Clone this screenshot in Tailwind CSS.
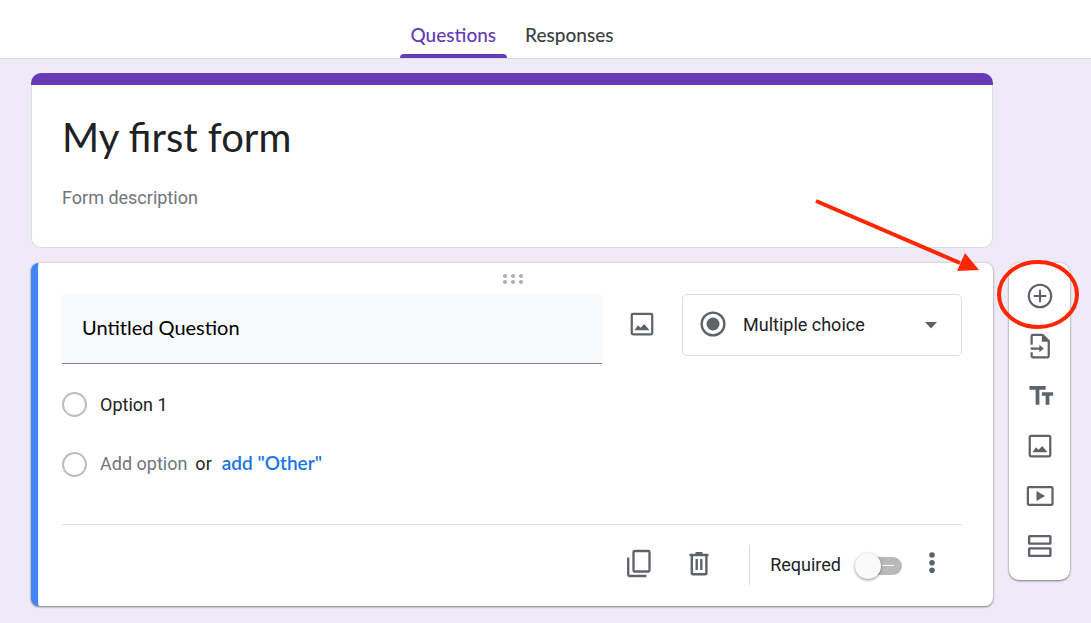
<!DOCTYPE html>
<html lang="en">
<head>
<meta charset="utf-8">
<meta name="viewport" content="width=device-width, initial-scale=1">
<title>My first form</title>
<script src="https://cdn.jsdelivr.net/npm/@tailwindcss/browser@4"></script>
</head>
<body class="min-h-screen bg-[#eeeaf7] font-[Roboto,sans-serif] text-lg text-[#202124]">
<header class="border-b border-[#dadce0] bg-white pt-3">
  <nav class="mr-[67px] flex justify-center gap-[7px] font-[Lato,sans-serif] text-[19px] font-medium">
    <a href="#questions" aria-current="page" class="relative flex h-[46px] items-center px-[11px] text-[#673ab7]">Questions<span class="absolute inset-x-0 bottom-0 h-1 rounded-t bg-[#673ab7]"></span></a>
    <a href="#responses" class="flex h-[46px] items-center px-[11px] text-[#3c4043]">Responses</a>
  </nav>
</header>

<div class="flex items-end gap-4 pt-[14px] pr-[21px] pb-[17px] pl-[31px]">
  <main class="min-w-0 flex-1">
    <section>
      <div class="h-3 rounded-t-[10px] bg-[#673ab7]"></div>
      <div class="flex flex-col rounded-b-[10px] border border-t-0 border-[#dadce0] bg-white px-[30px] pt-[22px] pb-[35px]">
        <input aria-label="Form title" value="My first form" class="h-[60px] w-full font-[Lato,sans-serif] text-[40px] outline-none">
        <input aria-label="Form description" placeholder="Form description" class="mt-[15px] h-[30px] w-full outline-none placeholder:text-[#70757a]">
      </div>
    </section>

    <section class="mt-[15px] overflow-hidden rounded-[8px] border-l-[7px] border-[#4285f4] bg-white pr-[31px] pl-6 shadow-[0_1px_2px_rgba(0,0,0,0.45),0_0_3px_rgba(0,0,0,0.15)]">
      <div class="flex h-[31px] items-center justify-center pl-[2px]">
        <svg width="22" height="12" viewBox="0 0 22 12" fill="#b0b0b0"><circle cx="3" cy="3" r="2.1"/><circle cx="11" cy="3" r="2.1"/><circle cx="19" cy="3" r="2.1"/><circle cx="3" cy="9" r="2.1"/><circle cx="11" cy="9" r="2.1"/><circle cx="19" cy="9" r="2.1"/></svg>
      </div>
      <div class="flex items-start">
        <input aria-label="Question" value="Untitled Question" class="h-[70px] min-w-0 flex-1 rounded-t-[4px] border-b border-[#80868b] bg-[#f8f9fb] px-5 pb-1 font-[Lato,sans-serif] text-xl text-black outline-none">
        <button aria-label="Add image" class="flex h-[60px] w-20 items-center justify-center">
          <svg width="30" height="30" viewBox="0 0 24 24" fill="#5f6368"><rect x="3.8" y="3.8" width="16.4" height="16.4" rx="1" fill="none" stroke="#5f6368" stroke-width="1.8"/><path d="M6 17l2.8-4 2 2 3-3 4.2 5z"/></svg>
        </button>
        <div class="relative w-[280px]">
          <select aria-label="Question type" class="h-[62px] w-full appearance-none rounded-[5px] border border-[#dadce0] bg-white pr-12 pl-[60px] outline-none"><option>Multiple choice</option></select>
          <svg class="pointer-events-none absolute top-[15px] left-4" width="30" height="30" viewBox="0 0 24 24"><circle cx="12" cy="12" r="9.1" fill="none" stroke="#5f6368" stroke-width="1.9"/><circle cx="12" cy="12" r="5.2" fill="#5f6368"/></svg>
          <svg class="pointer-events-none absolute top-7 right-[25px]" width="12" height="7" viewBox="0 0 12 7" fill="#5f6368"><path d="M0 0h12L6 6.500z"/></svg>
        </div>
      </div>
      <div class="mt-[10px] flex h-[60px] items-center gap-[13px]">
        <input type="radio" disabled aria-label="Option 1" class="size-[25px] appearance-none rounded-full border-2 border-[#bdbdbd]">
        <input aria-label="Option 1 text" value="Option 1" class="h-8 min-w-0 flex-1 outline-none">
      </div>
      <div class="flex h-[60px] items-center">
        <input type="radio" disabled aria-label="New option" class="size-[25px] appearance-none rounded-full border-2 border-[#bdbdbd]">
        <button class="ml-[13px] text-[#70757a]">Add option</button>
        <span class="ml-2">or</span>
        <button class="ml-[10px] pb-[2px] font-[Lato,sans-serif] text-[19px] font-semibold text-[#1a73e8]">add "Other"</button>
      </div>
      <div class="mt-[30px] flex h-[82px] items-center justify-end border-t border-[#dadce0] pb-[2px]">
        <button aria-label="Duplicate" class="flex h-[60px] w-[60px] items-center justify-center pb-[2px]">
          <svg width="30" height="30" viewBox="0 0 30 30" fill="none" stroke="#5f6368" stroke-width="2.300"><rect x="9.500" y="2" width="16" height="20.500" rx="1"/><path d="M4.200 8.500v17.300q0 1.200 1.200 1.200h17"/></svg>
        </button>
        <button aria-label="Delete" class="flex h-[60px] w-[60px] items-center justify-center pb-[2px]">
          <svg width="30" height="30" viewBox="0 0 30 30" fill="none" stroke="#5f6368" stroke-width="2.400"><path d="M5.500 6h19M7.800 6v18q0 1.300 1.300 1.300h12q1.300 0 1.300-1.300V6M12.700 10v11M17.300 10v11"/><path d="M11.500 4.200h7"/></svg>
        </button>
        <div class="ml-5 h-10 w-px bg-[#dadce0]"></div>
        <label class="ml-5 flex items-center gap-[14px]">Required
          <span class="relative mt-[2px] flex h-[26px] w-[47px] items-center">
            <input type="checkbox" role="switch" class="peer ml-[9px] h-[18px] flex-1 appearance-none rounded-full bg-[#b9b9b9] checked:bg-[#b39ddb]">
            <span class="pointer-events-none absolute right-2 h-px w-3 bg-white"></span>
            <span class="pointer-events-none absolute left-0 size-[26px] rounded-full bg-[#fafafa] shadow-[0_1px_3px_rgba(0,0,0,0.45)] peer-checked:left-[21px] peer-checked:bg-[#673ab7]"></span>
          </span>
        </label>
        <button aria-label="More options" class="flex h-[60px] w-[60px] items-center justify-center">
          <svg width="30" height="30" viewBox="0 0 30 30" fill="#5f6368"><circle cx="15" cy="5" r="2.800"/><circle cx="15" cy="12.700" r="2.800"/><circle cx="15" cy="20.300" r="2.800"/></svg>
        </button>
      </div>
    </section>
  </main>

  <aside class="relative mb-[26px] flex w-[61px] flex-col rounded-[10px] bg-white pt-2 pb-[9px] shadow-[0_1px_2px_rgba(0,0,0,0.45),0_0_3px_rgba(0,0,0,0.15)]">
    <button aria-label="Add question" class="flex h-[50px] items-center justify-center">
      <svg width="30" height="30" viewBox="0 0 24 24" fill="none" stroke="#5f6368" stroke-width="1.700"><circle cx="12" cy="12" r="9"/><path d="M12 7v10M7 12h10"/></svg>
    </button>
    <button aria-label="Import questions" class="flex h-[50px] items-center justify-center">
      <svg width="30" height="30" viewBox="0 0 24 24" fill="none" stroke="#5f6368" stroke-width="1.800"><path d="M5.300 11V4q0-1 1-1H14l5 5v12q0 1-1 1H6.300q-1 0-1-1v-3M4.500 14H13"/><path d="M13.500 2.500v6h6zM11.500 11l3.500 3-3.500 3z" fill="#5f6368" stroke="none"/></svg>
    </button>
    <button aria-label="Add title and description" class="flex h-[50px] items-center justify-center">
      <svg width="30" height="30" viewBox="-1 0 24 24" fill="#5f6368"><path d="M2.500 4v3h5v12h3V7h5V4zM21.500 9h-9v2.700h3V19h3v-7.300h3z"/></svg>
    </button>
    <button aria-label="Add image" class="flex h-[50px] items-center justify-center">
      <svg width="30" height="30" viewBox="0 0 24 24" fill="#5f6368"><rect x="3.800" y="3.800" width="16.400" height="16.400" rx="1" fill="none" stroke="#5f6368" stroke-width="1.800"/><path d="M6 17l2.800-4 2 2 3-3 4.200 5z"/></svg>
    </button>
    <button aria-label="Add video" class="flex h-[50px] items-center justify-center">
      <svg width="30" height="30" viewBox="0 0 24 24" fill="#5f6368"><rect x="2.300" y="4.800" width="19.700" height="14.200" rx=".8" fill="none" stroke="#5f6368" stroke-width="1.800"/><path d="M9.200 8v8l6.800-4z"/></svg>
    </button>
    <button aria-label="Add section" class="flex h-[50px] items-center justify-center">
      <svg width="30" height="30" viewBox="0 0 24 24" fill="none" stroke="#5f6368" stroke-width="1.900"><rect x="3.300" y="4.100" width="17" height="6" rx=".3"/><rect x="3.300" y="13.900" width="17" height="6" rx=".3"/></svg>
    </button>
    <!-- Callout: arrow and ring around "Add question" -->
    <svg class="pointer-events-none absolute top-[-70px] left-[-200px] max-w-none" width="280" height="140" viewBox="0 0 280 140" fill="none" stroke="#ff2600" stroke-width="4" aria-hidden="true"><path d="M7 8l144 62"/><path d="M170 77l-14-17-8 18z" fill="#ff2600" stroke="none"/><ellipse cx="229" cy="101.500" rx="39" ry="32.500"/></svg>
  </aside>
</div>
</body>
</html>
